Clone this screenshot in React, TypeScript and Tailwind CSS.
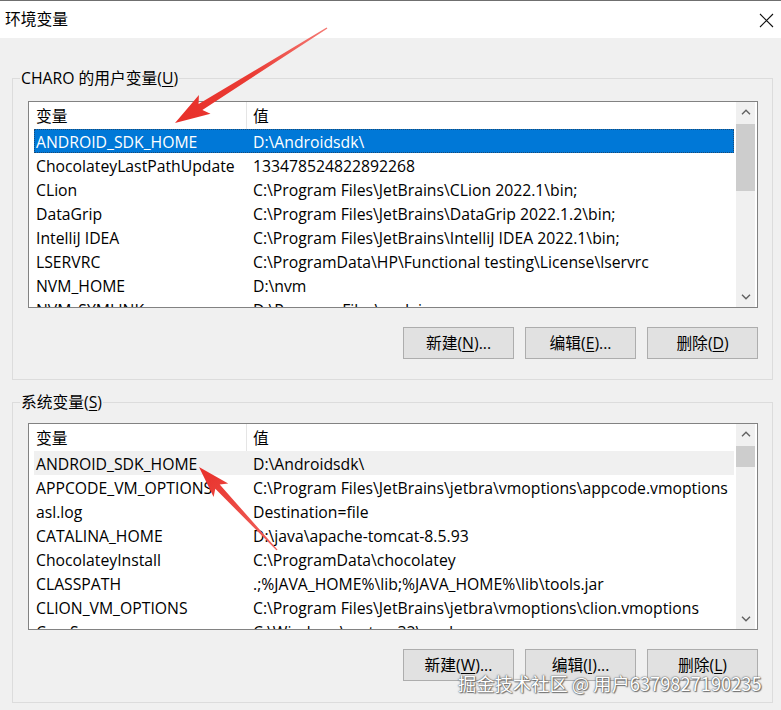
import React from 'react';
import clsx from 'clsx';

type Row = { name: string; value: string };

const userVars: Row[] = [
  { name: 'ANDROID_SDK_HOME', value: 'D:\\Androidsdk\\' },
  { name: 'ChocolateyLastPathUpdate', value: '133478524822892268' },
  { name: 'CLion', value: 'C:\\Program Files\\JetBrains\\CLion 2022.1\\bin;' },
  { name: 'DataGrip', value: 'C:\\Program Files\\JetBrains\\DataGrip 2022.1.2\\bin;' },
  { name: 'IntelliJ IDEA', value: 'C:\\Program Files\\JetBrains\\IntelliJ IDEA 2022.1\\bin;' },
  { name: 'LSERVRC', value: 'C:\\ProgramData\\HP\\Functional testing\\License\\lservrc' },
  { name: 'NVM_HOME', value: 'D:\\nvm' },
  { name: 'NVM_SYMLINK', value: 'D:\\Program Files\\nodejs' },
];

const sysVars: Row[] = [
  { name: 'ANDROID_SDK_HOME', value: 'D:\\Androidsdk\\' },
  { name: 'APPCODE_VM_OPTIONS', value: 'C:\\Program Files\\JetBrains\\jetbra\\vmoptions\\appcode.vmoptions' },
  { name: 'asl.log', value: 'Destination=file' },
  { name: 'CATALINA_HOME', value: 'D:\\java\\apache-tomcat-8.5.93' },
  { name: 'ChocolateyInstall', value: 'C:\\ProgramData\\chocolatey' },
  { name: 'CLASSPATH', value: '.;%JAVA_HOME%\\lib;%JAVA_HOME%\\lib\\tools.jar' },
  { name: 'CLION_VM_OPTIONS', value: 'C:\\Program Files\\JetBrains\\jetbra\\vmoptions\\clion.vmoptions' },
  { name: 'ComSpec', value: 'C:\\Windows\\system32\\cmd.exe' },
];

const Chevron = ({ up }: { up?: boolean }) => (
  <svg width="10" height="6" viewBox="0 0 10 6">
    <path
      d={up ? 'M1 5.2 L5 1.2 L9 5.2' : 'M1 0.8 L5 4.8 L9 0.8'}
      fill="none"
      stroke="#606060"
      strokeWidth="1.4"
    />
  </svg>
);

const Scrollbar = ({ thumb }: { thumb: number }) => (
  <div className="mr-[2px] flex w-[19px] shrink-0 flex-col bg-[#f0f0f0]">
    <div className="flex h-[20px] items-center justify-center">
      <Chevron up />
    </div>
    <div className="flex-1 pt-[2px]">
      <div className="bg-[#cdcdcd]" style={{ height: thumb }} />
    </div>
    <div className="flex h-[20px] items-center justify-center">
      <Chevron />
    </div>
  </div>
);

const VarList = ({ rows, focused, thumb }: { rows: Row[]; focused: boolean; thumb: number }) => (
  <div className="flex h-[207px] w-[730px] overflow-hidden border border-[#828282] bg-white">
    <div className="flex min-w-0 flex-1 flex-col">
      <div className="flex h-[27px] shrink-0 leading-[28px]">
        <div className="w-[218px] shrink-0 border-r border-[#e5e5e5] pl-[7px]">变量</div>
        <div className="pl-[6px]">值</div>
      </div>
      <div className="ml-[5px] mr-[2px]">
        {rows.map((r, i) => (
          <div
            key={r.name}
            className={clsx(
              'flex h-[24px] overflow-hidden whitespace-nowrap border leading-[24px]',
              i === 0 && focused && 'border-dotted border-[#1c4a75] bg-[#0078d7] text-white',
              i === 0 && !focused && 'border-transparent bg-[#f0f0f0]',
              i !== 0 && 'border-transparent'
            )}
          >
            <div className="w-[212px] shrink-0 pl-[1px]">{r.name}</div>
            <div className="pl-[6px]">{r.value}</div>
          </div>
        ))}
      </div>
    </div>
    <Scrollbar thumb={thumb} />
  </div>
);

const Btn = ({ label, k, tail }: { label: string; k: string; tail?: string }) => (
  <button className="h-[32px] w-[111px] border border-[#adadad] bg-[#e1e1e1] leading-[20px]">
    {label}(<span className="underline underline-offset-2">{k}</span>){tail}
  </button>
);

const Group = ({
  title,
  k,
  className,
  children,
}: {
  title: string;
  k: string;
  className: string;
  children: React.ReactNode;
}) => (
  <fieldset className={clsx('ml-[12px] w-[761px] min-w-0 border border-[#dcdcdc] pl-[15px] pr-[14px]', className)}>
    <legend className="-ml-[8px] px-[1px] leading-[20px]">
      {title}(<span className="underline underline-offset-2">{k}</span>)
    </legend>
    {children}
  </fieldset>
);

export default function App() {
  return (
    <div className="relative flex h-[710px] w-[781px] flex-col overflow-hidden bg-[#f0f0f0] text-[15.75px] text-black [font-family:'Open_Sans','Noto_Sans_CJK_SC',sans-serif]">
      <div className="flex h-[38px] shrink-0 items-center justify-between border-t border-[#6f6f6f] bg-white pl-[5px] pr-[7px] pt-[1px]">
        <span>环境变量</span>
        <svg width="15" height="15" viewBox="0 0 15 15">
          <path d="M1 1 L14 14 M14 1 L1 14" stroke="#111" strokeWidth="1.1" />
        </svg>
      </div>

      <div className="flex-1 pt-[30px]">
        <Group title="CHARO 的用户变量" k="U" className="pt-[13px] pb-[20px]">
          <VarList rows={userVars} focused thumb={67} />
          <div className="mt-[19px] flex justify-end gap-[11px]">
            <Btn label="新建" k="N" tail="..." />
            <Btn label="编辑" k="E" tail="..." />
            <Btn label="删除" k="D" />
          </div>
        </Group>

        <Group title="系统变量" k="S" className="mt-[12px] pt-[11px] pb-[21px]">
          <VarList rows={sysVars} focused={false} thumb={21} />
          <div className="mt-[19px] flex justify-end gap-[11px]">
            <Btn label="新建" k="W" tail="..." />
            <Btn label="编辑" k="I" tail="..." />
            <Btn label="删除" k="L" />
          </div>
        </Group>
      </div>

      <svg className="pointer-events-none absolute inset-0" width="781" height="710" viewBox="0 0 781 710">
        <defs>
          <linearGradient id="ar1" x1="327" y1="28" x2="175" y2="123" gradientUnits="userSpaceOnUse">
            <stop offset="0" stopColor="#f47a74" />
            <stop offset="0.5" stopColor="#ea3b34" />
            <stop offset="1" stopColor="#e8302a" />
          </linearGradient>
          <linearGradient id="ar2" x1="277" y1="550" x2="199" y2="467" gradientUnits="userSpaceOnUse">
            <stop offset="0" stopColor="#f0645e" />
            <stop offset="1" stopColor="#e8302a" />
          </linearGradient>
        </defs>
        <polygon
          points="327.4,28.4 202.4,110.1 210.5,113.7 175,123 198.9,95.1 198.6,104.1 326.6,27.6"
          fill="url(#ar1)"
        />
        <polygon
          points="277.6,549.7 219.7,484.6 228.2,483.5 199,467 213.6,497.1 215.3,488.8 276.4,550.3"
          fill="url(#ar2)"
        />
      </svg>

      <div className="absolute left-[458px] top-[671px] whitespace-nowrap text-[18.3px] leading-[24px] text-white [font-family:'Noto_Sans_CJK_SC',sans-serif] [text-shadow:0_0_1px_#555,0_0_2px_#666,1px_1px_1px_#777]">
        掘金技术社区 @ 用户6379827190235
      </div>
    </div>
  );
}
